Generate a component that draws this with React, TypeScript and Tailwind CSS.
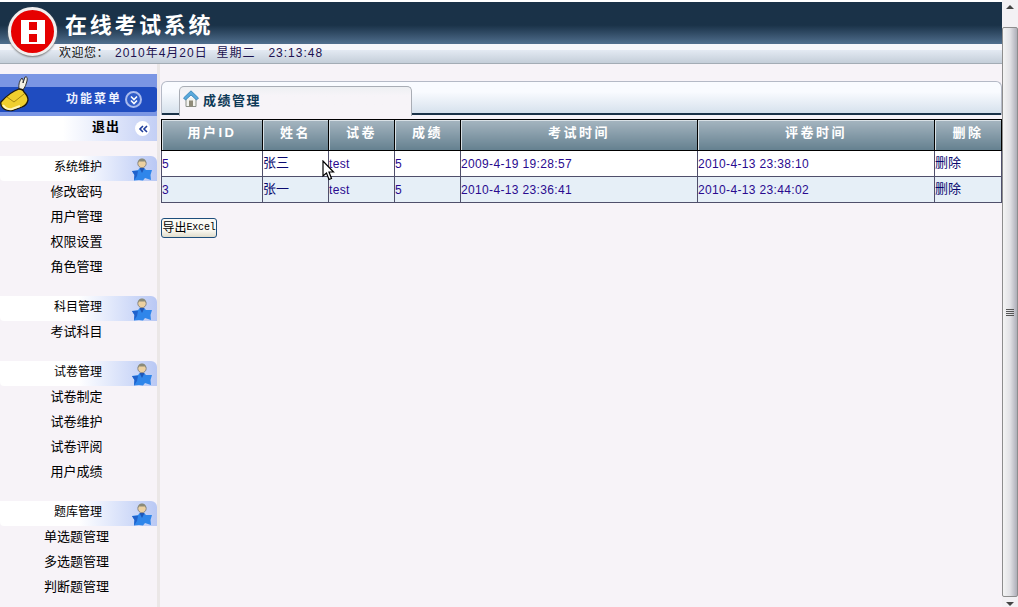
import React from 'react';

const cjk = "font-['Liberation_Sans','Noto_Sans_CJK_SC',sans-serif]";

const menu = [
  { title: '系统维护', items: ['修改密码', '用户管理', '权限设置', '角色管理'] },
  { title: '科目管理', items: ['考试科目'] },
  { title: '试卷管理', items: ['试卷制定', '试卷维护', '试卷评阅', '用户成绩'] },
  { title: '题库管理', items: ['单选题管理', '多选题管理', '判断题管理'] },
];

const columns = [
  { label: '用户ID', width: 'w-[101px]' },
  { label: '姓名', width: 'w-[66px]' },
  { label: '试卷', width: 'w-[66px]' },
  { label: '成绩', width: 'w-[66px]' },
  { label: '考试时间', width: 'w-[237px]' },
  { label: '评卷时间', width: 'w-[237px]' },
  { label: '删除', width: 'w-[67px]' },
];

const rows = [
  ['5', '张三', 'test', '5', '2009-4-19 19:28:57', '2010-4-13 23:38:10', '删除'],
  ['3', '张一', 'test', '5', '2010-4-13 23:36:41', '2010-4-13 23:44:02', '删除'],
];

const PersonIcon = () => (
  <svg width="22" height="25" viewBox="0 0 22 25">
    <path d="M1 15 L7 14 L9 12 L13 12 L15 14 L21 14 L19.5 19 L20 24 L14 22 L12 24.5 L8 24 L3 24.5 L3.5 19 Z" fill="#2f86ea" />
    <path d="M1 15 L7 15 L6 20 L3 24.5 L3.5 19 Z" fill="#1f62cc" />
    <path d="M8.5 12 L11 17 L13.5 12 Z" fill="#1d56b8" />
    <circle cx="11" cy="7.5" r="4.2" fill="#ecd0a0" stroke="#777" strokeWidth="0.8" />
    <path d="M6.8 7 Q7 2.5 11 2.5 Q15 2.5 15.2 7 L14 5.5 L8 5.5 Z" fill="#8a8a78" />
  </svg>
);

const HomeIcon = () => (
  <svg width="16" height="18" viewBox="0 0 16 18">
    <path d="M3 8 L3 16.5 L13 16.5 L13 8" fill="#f2f2ee" stroke="#8b8f88" strokeWidth="1" />
    <rect x="6" y="10.5" width="4" height="6" fill="#8f8a78" />
    <path d="M0.5 8 L8 0.8 L15.5 8 L13.5 10 L8 5 L2.5 10 Z" fill="#5aa9dc" stroke="#2f7fb5" strokeWidth="0.8" />
  </svg>
);

const BagIcon = () => (
  <svg width="30" height="38" viewBox="0 0 30 38">
    <path d="M19 15 Q18 8 22 4 Q24 6 23 9 L25 3 Q28 2 27 7 Q26 12 23 16 Z" fill="#f4f1e4" stroke="#333" strokeWidth="1" />
    <path d="M1 28 Q10 18 19 15 Q23 15 24 18 Q28 22 28 26 Q27 31 22 33 L12 36.5 Q6 37 3 34 Q0 31 1 28 Z" fill="#f0cf2e" stroke="#20190a" strokeWidth="1.3" />
    <path d="M3 31 Q6 36 12 35 L20 32" fill="none" stroke="#fff6b8" strokeWidth="2" />
    <path d="M7 23 L14 28 L24 20" fill="none" stroke="#a88a10" strokeWidth="1" />
  </svg>
);

const Chevrons = ({ dir, color }: { dir: 'down' | 'left'; color: string }) => (
  <svg width="10" height="10" viewBox="0 0 10 10" fill="none" stroke={color} strokeWidth="1.6">
    {dir === 'down' ? (
      <>
        <path d="M2 1.5 L5 4.5 L8 1.5" />
        <path d="M2 5.5 L5 8.5 L8 5.5" />
      </>
    ) : (
      <>
        <path d="M5 2 L2 5 L5 8" />
        <path d="M9 2 L6 5 L9 8" />
      </>
    )}
  </svg>
);

const Header = () => (
  <div className="relative shrink-0">
    <div className="h-[2px] bg-white" />
    <div className="flex h-[42px] items-start bg-gradient-to-b from-[#1a3248] from-55% to-[#516f8e] pl-[65px] pt-[6px]">
      <span className="text-[22px] leading-[30px] font-bold tracking-[2.7px] text-white font-['Noto_Sans_CJK_SC',serif]">
        在线考试系统
      </span>
    </div>
    <div className="h-[6px] bg-[#f7f6fa]" />
    <div className="flex h-[14px] items-center bg-gradient-to-b from-[#e4eaf3] to-[#c4ced9] pl-[59px] border-b border-[#a3acb5]">
      <span className={`-mt-[7px] w-[56px] text-xs leading-4 tracking-[0.5px] text-[#111] ${cjk}`}>欢迎您：</span>
      <span className={`-mt-[7px] whitespace-pre text-xs leading-4 tracking-[1px] text-[#1c1250] ${cjk}`}>
        2010年4月20日  星期二   23:13:48
      </span>
    </div>
    <div className="absolute left-[8px] top-[7px] flex h-[49px] w-[49px] items-center justify-center rounded-full bg-[#e60000] border-[3px] border-[#f1efef] shadow-[0_1px_2px_#777]">
      <div className="flex h-[24px] w-[24px] flex-col justify-between bg-white py-[2px]">
        <div className="mx-[8px] h-[8px] bg-[#e60000]" />
        <div className="mx-[8px] h-[8px] bg-[#e60000]" />
      </div>
    </div>
  </div>
);

const Sidebar = () => (
  <div className={`flex w-[160px] shrink-0 flex-col border-r-[3px] border-[#ebe7e7] pt-[10px] ${cjk}`}>
    <div className="relative h-[42px] bg-[#7b96e4] pt-[13px] pb-[4px]">
      <div className="flex h-[25px] items-center justify-end gap-[3px] rounded-r-[3px] bg-[#1f4cc0] pr-[15px]">
        <span className="pb-[2px] text-xs font-bold tracking-[2px] text-[#eef2ff]">功能菜单</span>
        <span className="flex h-[17px] w-[17px] items-center justify-center rounded-full bg-[#2f5cc8] border-2 border-[#a9bbee]">
          <Chevrons dir="down" color="#ffffff" />
        </span>
      </div>
      <div className="absolute left-0 top-0">
        <BagIcon />
      </div>
    </div>
    <div className="flex h-[25px] items-center justify-end gap-[14px] bg-gradient-to-r from-white from-40% to-[#c3cff5] pr-[7px]">
      <span className="pb-[4px] pr-[1px] text-[13px] font-bold tracking-[1px] text-black">退出</span>
      <span className="flex h-[15px] w-[15px] items-center justify-center rounded-full bg-white">
        <Chevrons dir="left" color="#1f3d9c" />
      </span>
    </div>
    <div className="mt-[15px] flex flex-col gap-[15px]">
      {menu.map((group) => (
        <div key={group.title}>
          <div className="relative flex h-[25px] items-center rounded-tr-[6px] rounded-bl-[4px] bg-gradient-to-r from-white from-50% to-[#b9c8f4] pb-[3px] pl-[54px]">
            <span className="text-xs text-black">{group.title}</span>
            <div className="absolute right-[4px] top-0">
              <PersonIcon />
            </div>
          </div>
          {group.items.map((item) => (
            <div key={item} className="h-[25px] pr-[4px] text-center text-[13px] leading-[22px] text-black">
              {item}
            </div>
          ))}
        </div>
      ))}
    </div>
  </div>
);

const Content = () => (
  <div className={`relative min-w-0 flex-1 pl-[1px] pt-[17px] ${cjk}`}>
    <div className="flex h-[34px] rounded-t-[6px] border-x border-t border-[#b4b9c6] bg-gradient-to-b from-[#f9fbff] from-30% to-[#d3dfeb] pl-[17px] shadow-[inset_0_-2px_0_#1a3248]">
      <div className="mt-[4px] flex h-[30px] w-[233px] items-start gap-[4px] rounded-t-[5px] border-x border-t border-[#a9adb5] bg-gradient-to-b from-[#eef0f3] to-[#f7f4f8] to-30% pl-[3px] pt-[3px]">
        <HomeIcon />
        <span className="mt-[2px] text-[13px] leading-[18px] font-bold tracking-[1.5px] text-[#0e3a57]">成绩管理</span>
      </div>
    </div>
    <table className="mt-[4px] w-[841px] table-fixed border-collapse text-xs">
      <thead>
        <tr>
          {columns.map((col) => (
            <th
              key={col.label}
              className={`${col.width} h-[31px] border border-black bg-gradient-to-b from-[#a5b5c0] to-[#64808f] pb-[4px] text-[13px] font-bold tracking-[2.5px] text-white shadow-[inset_1px_1px_0_#d8e0e5]`}
            >
              {col.label}
            </th>
          ))}
        </tr>
      </thead>
      <tbody>
        {rows.map((row, i) => (
          <tr key={i} className={i % 2 === 0 ? 'bg-white' : 'bg-[#e6eff7]'}>
            {row.map((cell, j) => (
              <td key={j} className="h-[26px] overflow-hidden whitespace-nowrap border border-[#4f4f6b] p-0 tracking-[0.35px] text-[#2a0a8f]">
                <span className={j === 1 || j === 6 ? 'relative -top-[1px] text-[13px] tracking-normal text-[#0a0a70]' : ''}>{cell}</span>
              </td>
            ))}
          </tr>
        ))}
      </tbody>
    </table>
    <button className="mt-[15px] flex h-[20px] w-[56px] items-center justify-center rounded-[3px] border border-[#1d4e7c] bg-gradient-to-b from-[#fbfaf5] from-60% to-[#e0dccb] text-xs leading-none text-black">
      导出<span className="font-['Liberation_Mono',monospace] text-[10px] tracking-[-0.2px]">Excel</span>
    </button>
    <svg className="absolute left-[162px] top-[96px]" width="13" height="21" viewBox="0 0 13 21">
      <path d="M1 1 L1 16 L4.5 13 L7 19.5 L9.5 18.5 L7 12 L11.5 12 Z" fill="#fff" stroke="#000" strokeWidth="1.2" />
    </svg>
  </div>
);

const Scrollbar = () => (
  <div className="flex w-[16px] shrink-0 flex-col bg-[#f3f1f4]">
    <div className="flex h-[27px] justify-center pt-[5px]">
      <div className="h-0 w-0 border-x-[4px] border-b-[4px] border-x-transparent border-b-[#444]" />
    </div>
    <div className="flex h-[570px] items-center justify-center rounded-[2px] border border-[#8d8d8d] bg-gradient-to-r from-[#f4f4f4] via-[#e2e2e6] to-[#aeaeb8]">
      <div className="flex w-[8px] flex-col gap-[1px]">
        <div className="h-[1px] bg-[#555]" />
        <div className="h-[1px] bg-[#555]" />
        <div className="h-[1px] bg-[#555]" />
        <div className="h-[1px] bg-[#555]" />
      </div>
    </div>
    <div className="flex flex-1 justify-center pt-[5px]">
      <div className="h-0 w-0 border-x-[4px] border-t-[4px] border-x-transparent border-t-[#444]" />
    </div>
  </div>
);

const App: React.FC = () => {
  return (
    <div className="flex h-[607px] w-[1018px] overflow-hidden bg-[#f7f3f8]">
      <div className="flex min-w-0 flex-1 flex-col">
        <Header />
        <div className="flex flex-1">
          <Sidebar />
          <Content />
        </div>
      </div>
      <Scrollbar />
    </div>
  );
};

export default App;
